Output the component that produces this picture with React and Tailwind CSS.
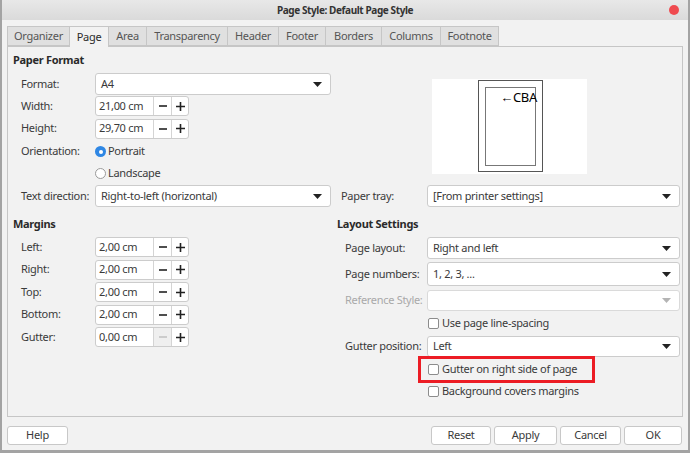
import React from 'react';

const Caret = ({ disabled }) => (
  <svg width="9" height="5" viewBox="0 0 9 5" className="shrink-0">
    <path d="M0 0 L9 0 L4.5 5 Z" fill={disabled ? '#b4b4b4' : '#222'} />
  </svg>
);

const Select = ({ value, h = 'h-[22px]', disabled }) => (
  <div
    className={`flex ${h} w-full items-center justify-between rounded-[3px] border bg-white pl-[5px] pr-[8px] ${
      disabled ? 'border-[#dadada] bg-[#f7f7f7]' : 'border-[#cccccc]'
    }`}
  >
    <span>{value}</span>
    <Caret disabled={disabled} />
  </div>
);

const Spin = ({ value, minusOff }) => (
  <div className="flex h-[20px] w-[94px] rounded-[3px] border border-[#cccccc] bg-white">
    <div className="flex w-[57px] items-center pl-[3px]">{value}</div>
    <div
      className={`flex w-[18px] items-center justify-center border-l border-[#d4d4d4] ${
        minusOff ? 'bg-[#efefef]' : ''
      }`}
    >
      <svg width="8" height="8" viewBox="0 0 8 8">
        <path d="M0 4 H8" stroke={minusOff ? '#c4c4c4' : '#222'} strokeWidth="1.6" />
      </svg>
    </div>
    <div className="flex w-[17px] items-center justify-center border-l border-[#d4d4d4]">
      <svg width="9" height="9" viewBox="0 0 9 9">
        <path d="M0 4.5 H9 M4.5 0 V9" stroke="#222" strokeWidth="1.6" />
      </svg>
    </div>
  </div>
);

const Check = ({ label }) => (
  <div className="flex items-center gap-[3px]">
    <div className="h-[11px] w-[11px] rounded-[2px] border border-[#8c8c8c] bg-white" />
    <span>{label}</span>
  </div>
);

const Radio = ({ label, on }) => (
  <div className="flex items-center gap-[2px]">
    {on ? (
      <div className="flex h-[11px] w-[11px] items-center justify-center rounded-full bg-[#2f87e4]">
        <div className="h-[4px] w-[4px] rounded-full bg-white" />
      </div>
    ) : (
      <div className="h-[11px] w-[11px] rounded-full border border-[#9a9a9a] bg-white" />
    )}
    <span>{label}</span>
  </div>
);

const LeftRow = ({ label, h, children }) => (
  <div className={`flex ${h} items-center pl-[8px]`}>
    <div className="w-[74px] shrink-0">{label}</div>
    <div className="flex-1">{children}</div>
  </div>
);

const RightRow = ({ label, h, children, dim }) => (
  <div className={`flex ${h} items-center pl-[8px]`}>
    <div className={`w-[82px] shrink-0 ${dim ? 'text-[#a9a9a9]' : ''}`}>{label}</div>
    <div className="flex-1">{children}</div>
  </div>
);

const tabs = [
  ['Organizer', 'w-[63px]'],
  ['Page', 'w-[39px]'],
  ['Area', 'w-[38px]'],
  ['Transparency', 'w-[81px]'],
  ['Header', 'w-[51px]'],
  ['Footer', 'w-[47px]'],
  ['Borders', 'w-[56px]'],
  ['Columns', 'w-[59px]'],
  ['Footnote', 'w-[58px]'],
];

export default function App() {
  return (
    <div className="flex h-[453px] w-[690px] flex-col overflow-hidden border-x-2 border-b-[3px] border-[#a3a3a3] bg-[#f2f2f2] font-['Noto_Sans',sans-serif] text-[11px] tracking-[-0.3px] text-[#3a3a3a]">
      {/* title bar */}
      <div className="relative flex h-[20px] shrink-0 items-center justify-center bg-gradient-to-b from-[#e8e8e8] to-[#dadada]">
        <span className="text-[10px] font-bold tracking-[-0.4px] text-[#333]">Page Style: Default Page Style</span>
        <div className="absolute right-[9px] top-[5px] h-[10px] w-[10px] rounded-full bg-[#ef4a4f]" />
      </div>

      {/* tabs */}
      <div className="mt-[6px] flex h-[21px] shrink-0 pl-[5px]">
        {tabs.map(([t, w]) => (
          <div
            key={t}
            className={`flex ${w} items-center justify-center border border-l-0 first:border-l border-[#c6c6c6] ${
              t === 'Page' ? 'relative z-10 h-[21px] border-b-0 bg-[#f2f2f2] text-[#2a2a2a]' : 'h-[20px] bg-[#e0e0e0] text-[#555]'
            }`}
          >
            {t}
          </div>
        ))}
      </div>

      {/* panel */}
      <div className="mx-[5px] -mt-px flex h-[371px] shrink-0 flex-col border border-[#c6c6c6] bg-[#f2f2f2] pl-[5px] pr-[2px]">
        {/* top section */}
        <div className="flex">
          <div className="w-[318px]">
            <div className="flex h-[26px] items-center font-bold text-[#2a2a2a]">Paper Format</div>
            <LeftRow label="Format:" h="h-[22px]">
              <Select value="A4" />
            </LeftRow>
            <LeftRow label="Width:" h="h-[22px]">
              <Spin value="21,00 cm" />
            </LeftRow>
            <LeftRow label="Height:" h="h-[23px]">
              <Spin value="29,70 cm" />
            </LeftRow>
            <LeftRow label="Orientation:" h="h-[23px]">
              <Radio label="Portrait" on />
            </LeftRow>
            <LeftRow label="" h="h-[21px]">
              <Radio label="Landscape" />
            </LeftRow>
          </div>
          <div className="ml-[6px] w-[343px]">
            <div className="ml-[95px] mt-[32px] flex h-[95px] w-[155px] bg-white pl-[46px]">
              <div className="mt-px h-[92px] w-[65px] border border-[#555] bg-white p-[6px] pb-[5px]">
                <div className="flex h-full w-full justify-end border border-[#777] pt-[2px] text-[13px] leading-[14px] tracking-[-0.3px] whitespace-nowrap text-black">
                  <span className="-mr-[2px]">←CBA</span>
                </div>
              </div>
            </div>
          </div>
        </div>

        {/* text direction / paper tray */}
        <div className="flex h-[24px] items-center">
          <div className="w-[318px]">
            <LeftRow label="Text direction:" h="h-[24px]">
              <Select value="Right-to-left (horizontal)" />
            </LeftRow>
          </div>
          <div className="ml-[6px] flex w-[343px] items-center pl-[4px]">
            <div className="w-[86px] shrink-0">Paper tray:</div>
            <Select value="[From printer settings]" />
          </div>
        </div>

        {/* margins / layout */}
        <div className="flex">
          <div className="w-[318px]">
            <div className="h-[28px] pt-[8px] font-bold leading-[16px] text-[#2a2a2a]">Margins</div>
            <LeftRow label="Left:" h="h-[22px]">
              <Spin value="2,00 cm" />
            </LeftRow>
            <LeftRow label="Right:" h="h-[23px]">
              <Spin value="2,00 cm" />
            </LeftRow>
            <LeftRow label="Top:" h="h-[22px]">
              <Spin value="2,00 cm" />
            </LeftRow>
            <LeftRow label="Bottom:" h="h-[23px]">
              <Spin value="2,00 cm" />
            </LeftRow>
            <LeftRow label="Gutter:" h="h-[22px]">
              <Spin value="0,00 cm" minusOff />
            </LeftRow>
          </div>
          <div className="ml-[6px] w-[343px]">
            <div className="h-[28px] pt-[8px] font-bold leading-[16px] text-[#2a2a2a]">Layout Settings</div>
            <RightRow label="Page layout:" h="h-[24px]">
              <Select value="Right and left" />
            </RightRow>
            <RightRow label="Page numbers:" h="h-[28px]">
              <Select value="1, 2, 3, ..." h="h-[24px]" />
            </RightRow>
            <RightRow label="Reference Style:" h="h-[24px]" dim>
              <Select value="" h="h-[21px]" disabled />
            </RightRow>
            <div className="flex h-[22px] items-center pl-[91px]">
              <Check label="Use page line-spacing" />
            </div>
            <RightRow label="Gutter position:" h="h-[25px]">
              <Select value="Left" h="h-[21px]" />
            </RightRow>
            <div className="relative flex h-[21px] items-center pl-[91px]">
              <Check label="Gutter on right side of page" />
              <div className="absolute left-[81px] top-[-3px] h-[27px] w-[177px] border-[3px] border-[#ec1c24]" />
            </div>
            <div className="flex h-[22px] items-center pl-[91px]">
              <Check label="Background covers margins" />
            </div>
          </div>
        </div>
      </div>

      {/* buttons */}
      <div className="mt-[9px] flex h-[19px] px-[5px]">
        <button className="w-[61px] rounded-[3px] border border-[#c8c8c8] bg-white">Help</button>
        <div className="flex-1" />
        <div className="flex gap-[3px] pr-[1px]">
          <button className="w-[60px] rounded-[3px] border border-[#c8c8c8] bg-white">Reset</button>
          <button className="w-[63px] rounded-[3px] border border-[#c8c8c8] bg-white">Apply</button>
          <button className="w-[61px] rounded-[3px] border border-[#c8c8c8] bg-white">Cancel</button>
          <button className="w-[58px] rounded-[3px] border border-[#c8c8c8] bg-white">OK</button>
        </div>
      </div>
    </div>
  );
}
